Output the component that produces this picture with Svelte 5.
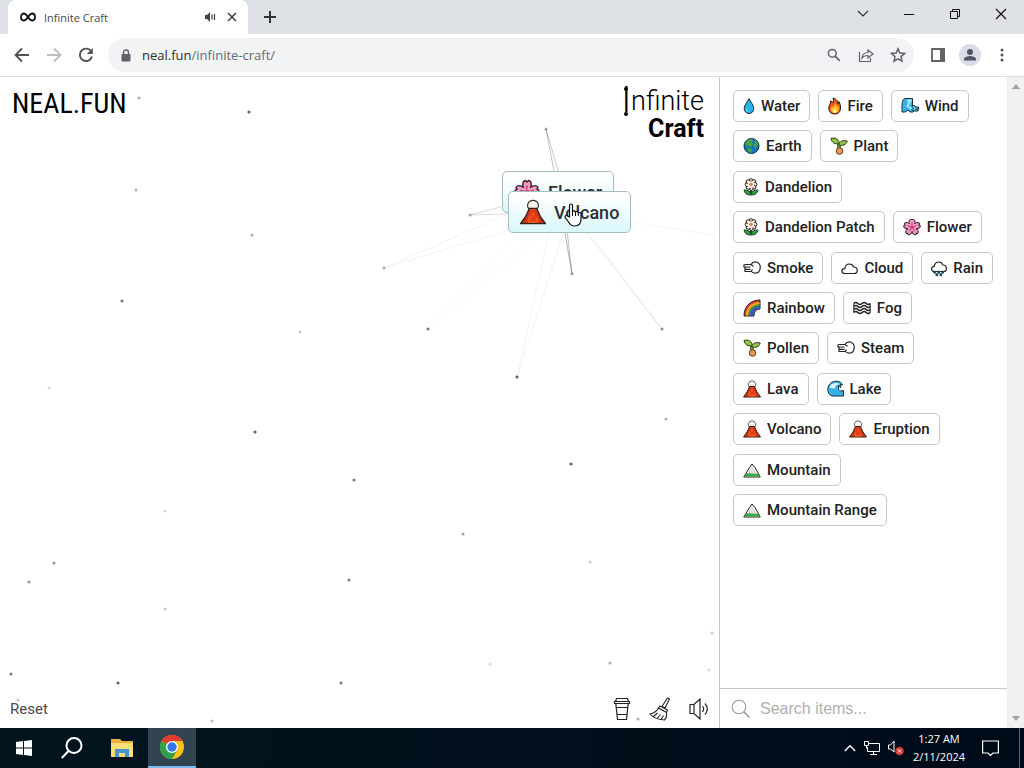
<script>
  const items = [
    ['Water', 'water'], ['Fire', 'fire'], ['Wind', 'wind'], ['Earth', 'earth'], ['Plant', 'plant'],
    ['Dandelion', 'daisy'], ['Dandelion Patch', 'daisy'], ['Flower', 'flower'], ['Smoke', 'puff'],
    ['Cloud', 'cloud'], ['Rain', 'rain'], ['Rainbow', 'rainbow'], ['Fog', 'fog'], ['Pollen', 'plant'],
    ['Steam', 'puff'], ['Lava', 'volcano'], ['Lake', 'wave'], ['Volcano', 'volcano'],
    ['Eruption', 'volcano'], ['Mountain', 'mountain'], ['Mountain Range', 'mountain']
  ];
  const iconWidths = { water: 12, fire: 13, daisy: 16, earth: 17, cloud: 17, rain: 16, wave: 17 };
  const petals = [0, 72, 144, 216, 288];
  const smallPetals = [0, 45, 90, 135, 180, 225, 270, 315];
  // x, y, opacity
  const dots = [
    [139, 21, 0.3], [249, 35, 0.6], [136, 113, 0.3], [252, 158, 0.3], [122, 224, 0.5], [300, 255, 0.2],
    [49, 311, 0.15], [255, 355, 0.6], [354, 403, 0.5], [165, 434, 0.15], [54, 486, 0.4], [29, 505, 0.4],
    [349, 503, 0.5], [165, 532, 0.2], [463, 457, 0.35], [571, 387, 0.6], [590, 485, 0.2], [666, 342, 0.3],
    [712, 556, 0.2], [709, 593, 0.15], [610, 586, 0.3], [490, 587, 0.15], [341, 606, 0.5], [118, 606, 0.6],
    [11, 597, 0.5], [18, 623, 0.2], [212, 644, 0.25], [638, 642, 0.3], [384, 191, 0.3], [428, 252, 0.5],
    [517, 300, 0.6], [572, 197, 0.3], [662, 252, 0.4], [546, 52, 0.3], [470, 138, 0.3]
  ];
  // x1, y1, x2, y2, opacity
  const links = [
    [546, 52, 558, 115, 0.24], [546, 52, 570, 135, 0.2], [470, 138, 558, 115, 0.14], [470, 138, 570, 135, 0.14],
    [384, 191, 558, 115, 0.05], [384, 191, 570, 135, 0.05], [428, 252, 558, 115, 0.03], [428, 252, 570, 135, 0.03],
    [517, 300, 558, 115, 0.05], [517, 300, 570, 135, 0.05], [572, 197, 558, 115, 0.3], [572, 197, 565, 135, 0.25],
    [662, 252, 558, 115, 0.06], [662, 252, 570, 135, 0.08], [719, 159, 570, 135, 0.04]
  ];
</script>

{#snippet emoji(kind, big)}
  {@const w = iconWidths[kind] ?? 18}
  <svg class={['emoji', big && 'big']} viewBox="0 0 {w} 18" width={big ? undefined : w} height={big ? undefined : 18} aria-hidden="true">
    {#if kind === 'water'}
      <path d="M6 1.600C4.600 5 1.200 8 1.200 11.700a4.800 4.800 0 0 0 9.600 0C10.800 8 7.400 5 6 1.600Z" fill="#24b5e3" stroke="#182c38" />
      <path d="M3.500 11.500c0 2 .8 2.900 2 3.200" fill="none" stroke="#8de4f8" />
    {:else if kind === 'fire'}
      <path d="M5 1c4 1 5 4 5 6 .5-.6.800-1.500.8-2.500 1.400 2 1.700 4 1.700 6.500 0 3.800-2.200 6-5.900 6S.8 14.500.8 11C.8 8 3 7 2.600 4L5 5.500C5.700 4 5.700 2.500 5 1Z" fill="#f25a1c" stroke="#2d1208" />
      <path d="M6.800 16c-2.800 0-4-1.700-4-4 0-1.200.6-2 1.300-2.700l1 1.500C5.500 9 7 8.200 7.300 6.800c1.200 1 1.700 2 1.700 3.200l1.200-1c.4.900.6 1.800.6 2.900C10.800 14.500 9.500 16 6.800 16Z" fill="#ffbd26" />
      <path d="M6.800 16c-2 0-2.500-2.500 0-4.500 2.500 2 2 4.500 0 4.500Z" fill="#fff38a" />
    {:else if kind === 'wind'}
      <path d="M1 15C1 11 .8 7 1.500 4.500 2 2 3.500 1.500 5 1.500h6.500v8L13 13l-1 2H9l-2-2-3 2Z" fill="#38b4e8" stroke="#14303d" />
      <path d="M6 3.500h3.500l-3 5.500 4 3" fill="none" stroke="#a4eafd" stroke-width="2" />
      <path d="M10.500 8.500h3l1 1.500h3v2h-3M17 12v2h-4.500l-2-2" fill="#4dbbe7" stroke="#14303d" />
    {:else if kind === 'earth'}
      <circle cx="8.500" cy="9" r="7.500" fill="#1976bd" stroke="#103048" />
      <path d="M3 5c2-3 4-3 6-3 2 1 0 3-1 3l2 2-2 3-3-1-3-2Zm9-2c2 1 3 3 3 5l-3 3-2-3 2-2Zm-7 8 4 1-1 4-3-2Z" fill="#45a842" />
    {:else if kind === 'plant'}
      <path d="M9 7v6" stroke="#233d12" stroke-width="3.500" />
      <path d="M9 7v5" stroke="#8fc045" stroke-width="1.500" />
      <path d="M1 1.500c4.500-1.300 7.800.5 8.300 5-4.500 1-7.300-.5-8.300-5Z" fill="#93c445" stroke="#243b13" />
      <path d="M17.200 4c-4.500-1-8 .2-8.500 4 4 1 7.500 0 8.500-4Z" fill="#93c445" stroke="#243b13" />
      <circle cx="9.500" cy="14" r="3.300" fill="#e59a58" stroke="#6b3c1c" />
    {:else if kind === 'daisy'}
      <path d="M8 10v6" stroke="#174c20" stroke-width="2" />
      <path d="M1 12c4 0 6 1 7 4 1-3 3-4 7-4-1 4-3 5-7 5s-6-1-7-5Z" fill="#2f9e40" stroke="#163b1a" />
      {#each smallPetals as a}<ellipse cx="8" cy="3" rx="2" ry="2.400" fill="#fff7ed" stroke="#302b28" transform="rotate({a} 8 6.500)" />{/each}
      <circle cx="8" cy="6.500" r="3.300" fill="#fff7ed" />
      <circle cx="8" cy="6.500" r="1.800" fill="#ee8153" />
    {:else if kind === 'flower'}
      {#each petals as a}<path d="M9 9C5 6 5.500 1.500 8 1l1 1 1-1c2.500.5 3 5-1 8Z" fill="#f39cc4" stroke="#3d2030" transform="rotate({a} 9 9.300)" />{/each}
      <circle cx="9" cy="9.300" r="4" fill="#f39cc4" />
      <circle cx="9" cy="9.300" r="2" fill="#d83a76" />
      {#each petals as a}<path d="M9 7V4.500" stroke="#c83b74" transform="rotate({a} 9 9.300)" />{/each}
    {:else if kind === 'puff'}
      <path d="M8 5.500C9.500 3 11.500 2.500 13.500 3c2.500 1 4 3.500 3.700 6-.2 3-2 5-4.700 5.200-2 .1-3.500-.7-4.500-2.200M1.500 5.500H8l2.500 1.800M1 8h6.500M1 5.500V8h1v4.500h6l1.500-2M2 10.300h5.500" fill="none" stroke="#222" stroke-width="1.200" />
    {:else if kind === 'cloud'}
      <path d="M4 14.500C1.500 14.500.8 13.300.8 12S2 9.700 3.800 9.700C4.200 6.700 6 5 8.500 5c2 0 3.500 1 4.200 3 2.300 0 3.500 1.200 3.500 3.200s-1 3.300-3.200 3.300Z" fill="#fff" stroke="#222" stroke-width="1.200" />
    {:else if kind === 'rain'}
      <path d="M3.500 12.500c-2 0-2.900-1-2.900-2.700s1.200-2.500 2.700-2.500C3.700 4.500 5.500 3 7.800 3s3.500 1.300 4.200 3c2.200-.1 3.400 1.200 3.400 3.200s-1 3.300-2.900 3.300Z" fill="#fff" stroke="#222" stroke-width="1.200" />
      <path d="m4.500 12-1.300 2.500M8.500 12l-1.300 2.500M12.500 12l-1.300 2.500M6.300 14.500l-1 2.500M10.300 14.500l-1 2.500" stroke="#16495a" stroke-width="2.400" />
    {:else if kind === 'rainbow'}
      <path d="M1 17C1 7 8 1 17 1v9c-3 0-6 2-6 7Z" fill="#e5392f" stroke="#27201d" />
      <path d="M4 16.500C4 9 9.500 4.300 16.500 4.300" fill="none" stroke="#f7b51e" stroke-width="2" />
      <path d="M6 16.500C6 10.500 10.500 6.300 16.500 6.300" fill="none" stroke="#37a34a" stroke-width="1.500" />
      <path d="M8.500 16.500c0-5 3.500-8.300 8-8.300" fill="none" stroke="#2464bd" stroke-width="3" />
    {:else if kind === 'fog'}
      {#each [4.500, 7.500, 10.500, 13.500] as y}<path d="M.8 {y}q2-2 4 0t4.200 0 4.200 0 4 0" fill="none" stroke="#222" stroke-width="1.500" />{/each}
      <path d="M.8 4.500v9M17.200 4.500v9" stroke="#222" />
    {:else if kind === 'volcano'}
      <path d="M6.500 7C4 5 5.500 1 9 1s5 4 2.500 6Z" fill="#f7f2ea" stroke="#333" stroke-width=".8" />
      <path d="M6.500 6.500h5L14 12l3.500 5H.5L4 12Z" fill="#e03c19" stroke="#302019" />
      <path d="m6 9-3 7M12 9l3 7" stroke="#a52e17" stroke-width=".8" />
      <path d="M9 9.500V12M7 12l-1 4h6l-1-3" stroke="#f26420" fill="none" />
    {:else if kind === 'wave'}
      <path d="M16.500 16H5C2 15 .8 12 .8 9.500.8 4.500 5 1 9.500 1.200c3 0 5 1.300 6 3.800l-2.500-.5 1 3-2.500-2v4c1 2 3 1.500 5 1Z" fill="#36b2e5" stroke="#142e3b" />
      <path d="M2.500 8C3 4.500 6 3 9 3c2 0 3 .5 4 1.500-3-.5-5 1-5 4" fill="#d9f6fc" />
    {:else if kind === 'mountain'}
      <path d="M.8 16 6.500 6.500 9 3l3 3.500L17.200 16Z" fill="#f3f4f0" stroke="#222" />
      <path d="M1.500 15.500 3.500 12.500c4-.5 8 .5 11.200 0l1.800 3Z" fill="#3ca746" />
      <path d="M6.500 12V9M9 12V6M12 12l-1-3" stroke="#b4bab1" stroke-width=".8" fill="none" />
    {/if}
  </svg>
{/snippet}

<div class="screen">
  <header class="tabs">
    <div class="tab">
      <svg width="16" height="10" viewBox="0 0 16 10" aria-hidden="true"><path d="M8 5C6.200 2.400 5.200 1.500 3.800 1.500 2.200 1.500 1 3 1 5s1.200 3.500 2.800 3.500C5.200 8.500 6.200 7.600 8 5s2.800-3.500 4.200-3.500C13.800 1.500 15 3 15 5s-1.200 3.500-2.800 3.500C10.800 8.500 9.800 7.600 8 5Z" fill="none" stroke="#111" stroke-width="1.800" /></svg>
      <span class="tab-title">Infinite Craft</span>
      <svg width="12" height="12" viewBox="0 0 12 12" aria-hidden="true"><path d="M1 4h2l3-3v10L3 8H1Z" fill="#444" /><path d="M8 3.500v5M10.500 3v6" stroke="#444" stroke-width="1.200" /></svg>
      <button class="tab-close" aria-label="Close tab"><svg width="10" height="10" viewBox="0 0 10 10"><path d="m1 1 8 8M9 1 1 9" stroke="#444" stroke-width="1.600" /></svg></button>
    </div>
    <button class="new-tab" aria-label="New tab"><svg width="14" height="14" viewBox="0 0 14 14"><path d="M7 1v12M1 7h12" stroke="#333" stroke-width="2" /></svg></button>
    <div class="window-buttons">
      <button aria-label="Search tabs"><svg width="12" height="12" viewBox="0 0 12 12"><path d="m1 3 5 5 5-5" fill="none" stroke="#333" stroke-width="1.200" /></svg></button>
      <button aria-label="Minimize"><svg width="12" height="12" viewBox="0 0 12 12"><path d="M1 6.500h10" stroke="#111" /></svg></button>
      <button aria-label="Restore"><svg width="12" height="12" viewBox="0 0 12 12"><path d="M1.500 3.500h7v7h-7ZM3.500 3V1.500h7v7H9" fill="none" stroke="#111" /></svg></button>
      <button aria-label="Close"><svg width="12" height="12" viewBox="0 0 12 12"><path d="m1 1 10 10M11 1 1 11" stroke="#111" stroke-width="1.200" /></svg></button>
    </div>
  </header>

  <nav class="toolbar" aria-label="Browser">
    <div class="nav-buttons">
      <button aria-label="Back"><svg width="16" height="16" viewBox="0 0 16 16"><path d="M15 8H2M8 1.500 1.500 8 8 14.500" fill="none" stroke="#505356" stroke-width="1.800" /></svg></button>
      <button aria-label="Forward"><svg width="16" height="16" viewBox="0 0 16 16"><path d="M1 8h13M8 1.500 14.500 8 8 14.500" fill="none" stroke="#bbbdbf" stroke-width="1.800" /></svg></button>
      <button aria-label="Reload"><svg width="16" height="16" viewBox="0 0 16 16"><path d="M13.300 4.500A6.200 6.200 0 1 0 14 9.500" fill="none" stroke="#505356" stroke-width="1.900" /><path d="M14.800 1v6H8.800Z" fill="#505356" /></svg></button>
    </div>
    <div class="address">
      <svg width="10" height="13" viewBox="0 0 10 13" aria-hidden="true"><path d="M2.500 6V3.500a2.500 2.500 0 0 1 5 0V6" fill="none" stroke="#5f6368" stroke-width="1.400" /><rect x=".5" y="5" width="9" height="7.500" rx="1" fill="#5f6368" /></svg>
      <span class="url">neal.fun<span>/infinite-craft/</span></span>
      <button aria-label="Zoom"><svg width="14" height="14" viewBox="0 0 14 14"><circle cx="5.300" cy="5.300" r="3.900" fill="none" stroke="#5f6368" stroke-width="1.500" /><path d="m8.200 8.200 4.600 4.600" stroke="#5f6368" stroke-width="1.700" /></svg></button>
      <button aria-label="Share"><svg width="16" height="16" viewBox="0 0 16 16"><path d="M1.500 5v9.500h11V11M4 11c.5-4 3-5.500 6-5.500V3l5 4-5 4V8.500C7.500 8.500 5.500 9 4 11Z" fill="none" stroke="#5f6368" stroke-width="1.200" /></svg></button>
      <button aria-label="Bookmark"><svg width="16" height="16" viewBox="0 0 16 16"><path d="m8 1.800 1.800 4.300 4.700.4-3.500 3.100 1 4.600L8 11.800l-4 2.400 1-4.600L1.500 6.500l4.700-.4Z" fill="none" stroke="#5f6368" stroke-width="1.500" /></svg></button>
    </div>
    <button class="side-panel" aria-label="Side panel"><svg width="14" height="14" viewBox="0 0 14 14"><path d="M1 1h12v12H1Z" fill="none" stroke="#5f6368" stroke-width="1.800" /><path d="M9 0h5v14H9Z" fill="#5f6368" /></svg></button>
    <button class="avatar" aria-label="Profile"><svg width="14" height="14" viewBox="0 0 14 14"><circle cx="7" cy="4" r="3" fill="#4d5566" /><path d="M1 12.500V11c0-2 4-3 6-3s6 1 6 3v1.500Z" fill="#4d5566" /></svg></button>
    <button class="more" aria-label="More"><svg width="4" height="14" viewBox="0 0 4 14" fill="#505356"><circle cx="2" cy="2" r="1.500" /><circle cx="2" cy="7" r="1.500" /><circle cx="2" cy="12" r="1.500" /></svg></button>
  </nav>

  <main>
    <section class="canvas" aria-label="Canvas">
      <svg class="particles" aria-hidden="true">
        {#each links as [x1, y1, x2, y2, o]}<line {x1} {y1} {x2} {y2} stroke="#000" stroke-opacity={o} />{/each}
        {#each dots as [cx, cy, o]}<circle {cx} {cy} r="1.600" fill-opacity={o} />{/each}
      </svg>
      <div class="canvas-top">
        <a class="site" href="/">NEAL.FUN</a>
        <h1><span class="thin"><span class="tall">I</span>nfinite</span><span class="bold">Craft</span></h1>
      </div>
      <button class="instance flower">{@render emoji('flower', true)}Flower</button>
      <button class="instance volcano">{@render emoji('volcano', true)}Volcano</button>
      <svg class="pointer" width="18" height="24" viewBox="0 0 18 24" aria-hidden="true"><path d="M5.500 14V2.500c0-2 3-2 3 0V9c.2-1.600 2.700-1.600 3 .2 1-1.300 2.600-.8 2.700.8 1.200-1 2.800-.4 2.800 1.300V16c0 4-2 7-6.500 7-3.500 0-5-2-6.300-4.500L1.300 14.600c-1-1.800 1-2.800 2.200-1.600Z" fill="#fff" stroke="#111" stroke-width="1.200" /><path d="M8.500 9v4M11.500 9.500V13M14.300 10.500V13" stroke="#111" /></svg>
      <div class="canvas-bottom">
        <button class="reset">Reset</button>
        <div class="tools">
          <button aria-label="Buy a coffee"><svg width="18" height="24" viewBox="0 0 18 24" fill="none" stroke="#222" stroke-width="1.200"><path d="M3.500 1.500h11l1 3h-13ZM1.500 4.500h15v2h-15ZM2.800 6.500l1.700 16h9l1.700-16M3.200 10.500h11.600M4.200 17.500h9.600" /></svg></button>
          <button aria-label="Clean up"><svg width="22" height="24" viewBox="0 0 22 24" fill="none" stroke="#222" stroke-width="1.100"><path d="m18.500 1 2 1-4.500 9-3-1.500ZM11 9l7.500 4-1 2.500L9.500 11ZM9.500 11C7.500 14.500 4 16.500 1 17c3 3.500 8 5.500 14.500 6 2-2 2.500-4.500 2-7.500M4.500 19.500 8.500 16M8 21.500l3.500-4M12 22.500l2.500-4" /></svg></button>
          <button aria-label="Toggle sound"><svg width="20" height="22" viewBox="0 0 20 22" fill="none" stroke="#222" stroke-width="1.200"><path d="M1 6.500h4L11 1v20l-6-5.500H1ZM5 6.500v9M13.500 8c1.500 2 1.500 4 0 6M16 5.500c3 3.500 3 7.500 0 11" /></svg></button>
        </div>
      </div>
    </section>

    <aside>
      <div class="items">
        {#each items as [name, kind]}
          <button class="item">{@render emoji(kind, false)}{name}</button>
        {/each}
      </div>
      <label class="search">
        <svg width="20" height="20" viewBox="0 0 20 20" aria-hidden="true"><circle cx="8" cy="8" r="6.800" fill="none" stroke="#999" stroke-width="1.100" /><path d="m12.800 12.800 5.700 5.700" stroke="#999" stroke-width="1.600" /></svg>
        <input type="text" placeholder="Search items..." aria-label="Search items" />
      </label>
    </aside>
    <div class="scrollbar" aria-hidden="true">
      <svg width="8" height="5" viewBox="0 0 8 5"><path d="m0 5 4-5 4 5Z" fill="#a0a0a0" /></svg>
      <svg width="8" height="5" viewBox="0 0 8 5"><path d="m0 0 4 5 4-5Z" fill="#a0a0a0" /></svg>
    </div>
  </main>

  <footer>
    <button class="task" aria-label="Start"><svg width="16" height="16" viewBox="0 0 16 16" fill="#fff"><path d="m0 2 7-1v6.500H0ZM8 .9 16 0v7.500H8ZM0 8.500h7V15l-7-1ZM8 8.500h8V16l-8-.9Z" /></svg></button>
    <button class="task" aria-label="Search"><svg width="22" height="22" viewBox="0 0 22 22" fill="none" stroke="#fff" stroke-width="2"><circle cx="13" cy="8.500" r="7.500" /><path d="M7.500 14 .8 21" /></svg></button>
    <button class="task" aria-label="File Explorer"><svg width="22" height="18" viewBox="0 0 22 18"><path d="M0 0h9l2 2h11v16H0Z" fill="#e9b13d" /><path d="M0 4h22v14H0Z" fill="#fbdc7b" /><path d="M4 18v-8h14v8h-4v-4H8v4Z" fill="#4396cf" /></svg></button>
    <button class="task active" aria-label="Google Chrome"><svg width="24" height="24" viewBox="0 0 24 24"><circle cx="12" cy="12" r="12" fill="#fbc116" /><path d="M12 12 1.600 6A12 12 0 0 1 22.400 6H12Z" fill="#e33b2e" /><path d="M1.600 6A12 12 0 0 0 12 24l5.200-9H12L6.800 15Z" fill="#2da14c" /><path d="M1.600 6 6.800 15 12 12Z" fill="#2da14c" /><circle cx="12" cy="12" r="6" fill="#fff" /><circle cx="12" cy="12" r="4.700" fill="#3378e6" /></svg></button>
    <div class="tray">
      <button aria-label="Show hidden icons"><svg width="12" height="8" viewBox="0 0 12 8"><path d="m.8 7 5.200-5.200L11.200 7" fill="none" stroke="#fff" stroke-width="1.400" /></svg></button>
      <button aria-label="Network"><svg width="16" height="14" viewBox="0 0 16 14" fill="none" stroke="#fff"><path d="M5 2.500h10.500v8H3.500V6M9.500 10.500v3M6 13.500h7M.5.500h4v4h-4ZM2.500 4.500v3" /></svg></button>
      <button aria-label="Volume muted"><svg width="16" height="16" viewBox="0 0 16 16"><path d="M.5 5h2L6 1v11L2.500 9h-2Z" fill="none" stroke="#fff" /><circle cx="11.500" cy="11" r="4.300" fill="#d33a36" /><path d="m9.800 9.300 3.400 3.400M13.200 9.300l-3.400 3.400" stroke="#fff" /></svg></button>
      <button class="clock"><span>1:27 AM</span><span>2/11/2024</span></button>
      <button class="notify" aria-label="Notifications"><svg width="17" height="17" viewBox="0 0 17 17"><path d="M.6 1h15.800v12H11l-2.500 2.500L6 13H.6Z" fill="none" stroke="#fff" stroke-width="1.200" /></svg></button>
    </div>
  </footer>
</div>

<style>
  :global(body) { margin: 0; }
  * { box-sizing: border-box; }
  button { display: flex; align-items: center; justify-content: center; margin: 0; padding: 0; border: 0; background: none; color: inherit; font: inherit; }
  svg { flex: none; display: block; }
  .screen { display: flex; flex-direction: column; min-height: 100vh; background: #fff; font-family: "Open Sans", "Noto Sans", sans-serif; }

  .tabs { display: flex; height: 34px; padding-left: 8px; background: #dee1e6; }
  .tab { display: flex; align-items: center; width: 240px; padding: 0 6px 0 12px; border-radius: 8px 8px 0 0; background: #fff; color: #45494d; font-size: 11px; }
  .tab-title { flex: 1; margin-left: 8px; }
  .tab-close { width: 20px; height: 20px; margin-left: 6px; }
  .new-tab { width: 44px; }
  .window-buttons { display: flex; margin-left: auto; height: 28px; }
  .window-buttons button { width: 46px; }

  .toolbar { display: flex; align-items: center; height: 43px; padding: 0 14px 0 8px; border-bottom: 1px solid #dcdee0; }
  .nav-buttons { display: flex; gap: 4px; margin-right: 8px; }
  .nav-buttons button { width: 28px; height: 28px; }
  .address { display: flex; align-items: center; flex: 1; height: 34px; padding-left: 13px; border-radius: 17px; background: #f1f3f4; }
  .address button { width: 32px; height: 28px; }
  .url { flex: 1; margin-left: 11px; color: #2b2d30; font-size: 13px; }
  .url span { color: #676b70; }
  .side-panel { width: 28px; height: 28px; margin-left: 10px; }
  .avatar { width: 22px; height: 22px; margin-left: 7px; border-radius: 50%; background: #dadde5; }
  .more { width: 16px; height: 28px; margin-left: 13px; }

  main { display: flex; flex: 1; }
  .canvas { position: relative; display: flex; flex: 1; flex-direction: column; justify-content: space-between; overflow: hidden; font-family: Roboto, sans-serif; }
  .particles { position: absolute; inset: 0; width: 100%; height: 100%; }
  .canvas-top { display: flex; justify-content: space-between; padding: 8px 15px 0 12px; }
  .site { color: #000; font: 28px/38px "Liberation Sans Narrow", "Roboto Condensed", "Open Sans", sans-serif; text-decoration: none; }
  h1 { display: flex; flex-direction: column; align-items: flex-end; margin: 0; color: #000; font-size: 25px; line-height: 26px; }
  .thin { display: flex; align-items: center; height: 31px; font-size: 27px; font-weight: 300; }
  .tall { position: relative; font-size: 36px; line-height: 31px; }
  .tall::before, .tall::after { position: absolute; left: 50%; width: 4px; height: 4px; border-radius: 50%; background: #000; content: ""; transform: translateX(-50%); }
  .tall::before { top: 2px; }
  .tall::after { bottom: 0; }
  .bold { font-weight: 700; }

  .instance { position: absolute; gap: 8px; height: 42px; padding: 0 11px; border: 1px solid #a5bcc3; border-radius: 5px; background: linear-gradient(0deg, #d9f7fa, #fff 90%); color: #2b3033; font-size: 18px; font-weight: 500; }
  .emoji.big { width: 26px; height: 26px; }
  .instance.flower { top: 94px; left: 502px; }
  .instance.volcano { top: 114px; left: 508px; }
  .pointer { position: absolute; top: 126px; left: 564px; }

  .canvas-bottom { position: relative; display: flex; align-items: center; justify-content: space-between; height: 38px; padding: 0 10px; }
  .reset { color: #4a4a4a; font-size: 15px; }
  .tools { display: flex; gap: 18px; }

  aside { display: flex; flex-direction: column; width: 288px; border-left: 1px solid #c6c8ca; }
  .items { display: flex; flex-wrap: wrap; gap: 8px; align-content: space-between; min-height: 436px; margin: 13px 11px auto 13px; }
  .item { gap: 6px; height: 32px; padding: 0 9px; border: 1px solid #c8c8c8; border-radius: 5px; background: #fff; color: #222; font: 500 15px Roboto, sans-serif; }
  .search { display: flex; align-items: center; gap: 9px; height: 40px; padding-left: 11px; border-top: 1px solid #c6c8ca; }
  .search input { flex: 1; min-width: 0; padding: 0; border: 0; outline: 0; background: none; color: #333; font: 16px "Liberation Sans", sans-serif; }
  .search input::placeholder { color: #b0b0b0; }
  .scrollbar { display: flex; flex-direction: column; align-items: center; justify-content: space-between; width: 17px; padding: 7px 0; background: #f1f1f1; }

  footer { display: flex; height: 40px; background: linear-gradient(90deg, #02151f, #000b19); color: #fff; }
  .task { width: 48px; margin-right: 2px; }
  .task:first-child, .task.active { margin-right: 0; }
  .task.active { border-bottom: 2px solid #76b9ed; background: #31444f; }
  .tray { display: flex; align-items: center; gap: 8px; margin-left: auto; padding-right: 4px; }
  .clock { flex-direction: column; width: 54px; margin-right: 6px; font-size: 11px; line-height: 18px; }
  .notify { width: 40px; height: 40px; padding-right: 18px; border-right: 1px solid #58636c; }
</style>
